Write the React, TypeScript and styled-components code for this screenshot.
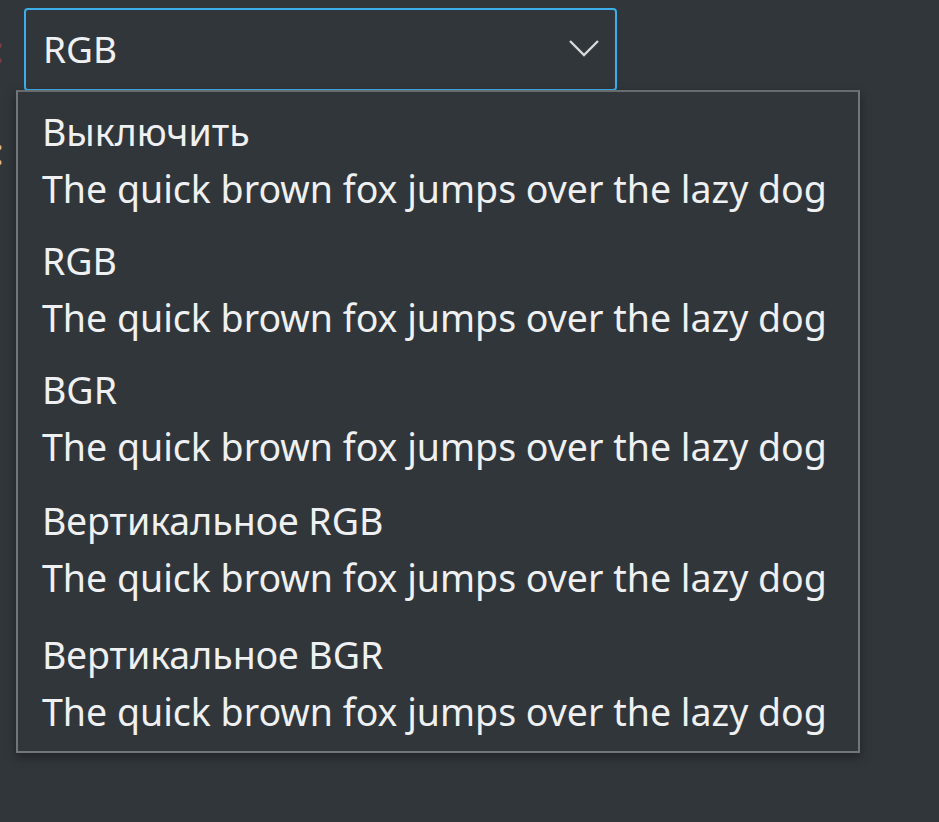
import React from 'react';
import styled, { createGlobalStyle } from 'styled-components';

const GlobalStyle = createGlobalStyle`
  html, body {
    margin: 0;
    padding: 0;
    background: #31363b;
  }
  body {
    font-family: "Noto Sans", "DejaVu Sans", sans-serif;
    color: #eff0f1;
    width: 939px;
    height: 822px;
    overflow: hidden;
  }
`;

const Page = styled.div`
  position: relative;
  width: 939px;
  height: 822px;
  display: flex;
  align-items: flex-start;
  padding-top: 8px;
  box-sizing: border-box;
`;

// form labels to the left of the combo, only their trailing colons are in view
const LabelColumn = styled.div`
  width: 4px;
  overflow: hidden;
  display: flex;
  flex-direction: column;
`;

const LabelTail = styled.div<{ $color: string; $height: number }>`
  height: ${p => p.$height}px;
  display: flex;
  align-items: center;
  justify-content: flex-end;
  color: ${p => p.$color};
  font-size: 36px;
  line-height: 1;
  white-space: nowrap;
`;

const Combo = styled.div`
  margin-left: 20px;
  width: 593px;
  height: 83px;
  box-sizing: border-box;
  border: 2px solid #3daee9;
  border-radius: 4px;
  background: #31363b;
  display: flex;
  align-items: center;
  justify-content: space-between;
  padding: 0 15px 0 17px;
`;

const ComboText = styled.span`
  font-size: 37px;
  line-height: 1;
  color: #eff0f1;
  padding-bottom: 2px;
`;

const Chevron = styled.svg`
  width: 32px;
  height: 19px;
  margin-bottom: 2px;
`;

const Popup = styled.div`
  position: absolute;
  left: 16px;
  top: 90px;
  width: 844px;
  height: 663px;
  box-sizing: border-box;
  border: 2px solid #727579;
  border-top-color: #686b6f;
  background: #31363b;
  box-shadow: 0 4px 10px rgba(0, 0, 0, 0.35);
  padding-top: 2px;
  display: flex;
  flex-direction: column;
`;

const Item = styled.div<{ $height: number }>`
  height: ${p => p.$height}px;
  flex-shrink: 0;
  box-sizing: border-box;
  padding: 9px 0 0 24px;
  display: flex;
  flex-direction: column;
`;

const Title = styled.div`
  height: 57px;
  font-size: 37.5px;
  line-height: 57px;
  color: #eff0f1;
  white-space: nowrap;
`;

const Sample = styled.div`
  height: 57px;
  font-size: 37.5px;
  line-height: 57px;
  color: #eff0f1;
  white-space: nowrap;
`;

const options = [
  { label: 'Выключить', height: 129 },
  { label: 'RGB', height: 129 },
  { label: 'BGR', height: 131 },
  { label: 'Вертикальное RGB', height: 134 },
  { label: 'Вертикальное BGR', height: 130 },
];
const sample = 'The quick brown fox jumps over the lazy dog';

export default function App() {
  return (
    <>
      <GlobalStyle />
      <Page>
        <LabelColumn>
          <LabelTail $color="#7a3c48" $height={83}>:</LabelTail>
          <LabelTail $color="#d8b890" $height={122}>:</LabelTail>
        </LabelColumn>
        <Combo>
          <ComboText>RGB</ComboText>
          <Chevron viewBox="0 0 32 19">
            <polyline
              points="2,2 16,16 30,2"
              fill="none"
              stroke="#d6d8da"
              strokeWidth="2.4"
            />
          </Chevron>
        </Combo>
        <Popup>
          {options.map(o => (
            <Item key={o.label} $height={o.height}>
              <Title>{o.label}</Title>
              <Sample>{sample}</Sample>
            </Item>
          ))}
        </Popup>
      </Page>
    </>
  );
}
